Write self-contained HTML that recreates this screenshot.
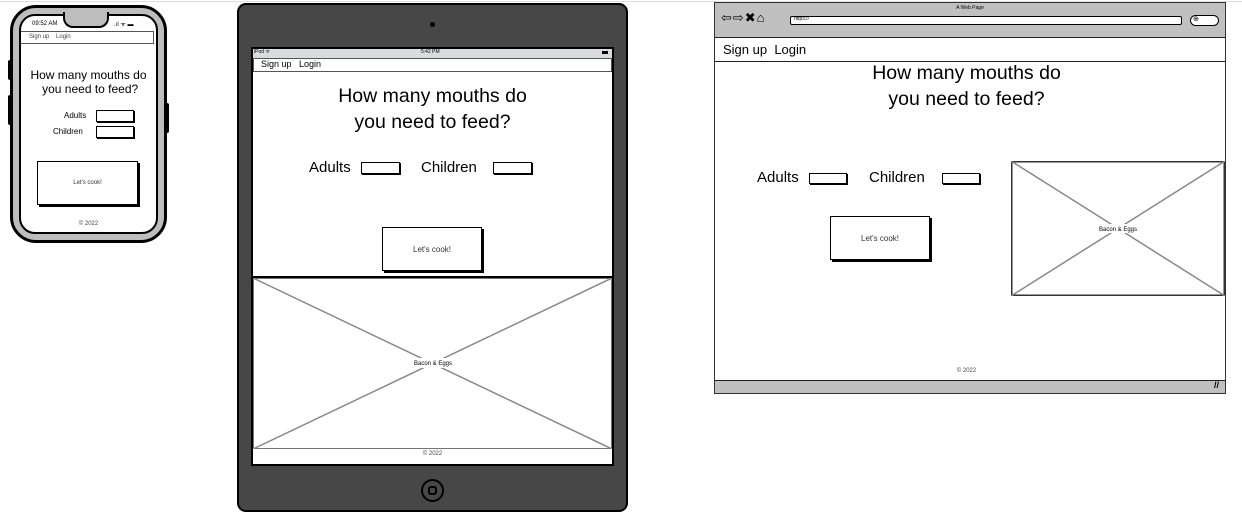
<!DOCTYPE html>
<html><head><meta charset="utf-8"><style>
*{margin:0;padding:0;box-sizing:border-box}
body{width:1242px;height:514px;background:#fff;position:relative;overflow:hidden;font-family:"Liberation Sans",sans-serif;color:#000}
.a{position:absolute}
.t{position:absolute;white-space:nowrap;text-align:center}
.inp{position:absolute;border:1.5px solid #000;background:#fff;box-shadow:1px 1px 0 #000}
.btn{position:absolute;border:1px solid #000;background:#fff;box-shadow:2px 2px 0 #000;display:flex;align-items:center;justify-content:center;font-size:8px;color:#333}
</style></head><body>
<div class="a" style="left:0;top:1px;width:1242px;height:1px;background:#ddd"></div>

<!-- PHONE -->
<div class="a" style="left:8px;top:60px;width:4px;height:20px;background:#000;border-radius:2px"></div>
<div class="a" style="left:8px;top:95px;width:4px;height:30px;background:#000;border-radius:2px"></div>
<div class="a" style="left:164px;top:103px;width:5px;height:30px;background:#000;border-radius:2px"></div>
<div class="a" style="left:10px;top:5px;width:157px;height:238px;background:#bdbdbd;border:3px solid #000;border-radius:26px"></div>
<div class="a" style="left:19px;top:14px;width:139px;height:220px;background:#fff;border:2.5px solid #000;border-radius:16px"></div>
<div class="a" style="left:63px;top:12px;width:46px;height:16px;background:#bdbdbd;border:2.5px solid #000;border-top:none;border-radius:0 0 10px 10px"></div>
<div class="t" style="left:32px;top:21px;font-size:6px">09:52 AM</div>
<div class="t" style="left:114px;top:20px;font-size:6px">.ıl ᯤ ▬</div>
<div class="a" style="left:21px;top:31px;width:133px;height:13px;border:1px solid #555;border-left:none"></div>
<div class="t" style="left:29px;top:34px;font-size:6px;color:#444">Sign up &nbsp;&nbsp; Login</div>
<div class="t" style="left:20px;top:68px;width:137px;font-size:12px;line-height:14px">How many mouths do<br>&nbsp;you need to feed?</div>
<div class="t" style="left:64px;top:111px;font-size:8px">Adults</div>
<div class="inp" style="left:96px;top:110px;width:38px;height:12px"></div>
<div class="t" style="left:53px;top:127px;font-size:8px">Children</div>
<div class="inp" style="left:96px;top:126px;width:38px;height:12px"></div>
<div class="btn" style="left:37px;top:161px;width:101px;height:44px;font-size:6px">Let's cook!</div>
<div class="t" style="left:20px;top:221px;width:137px;font-size:6px;color:#444">© 2022</div>

<!-- IPAD -->
<div class="a" style="left:237px;top:3px;width:391px;height:509px;background:#474747;border:2px solid #000;border-radius:9px"></div>
<div class="a" style="left:430px;top:22px;width:5px;height:5px;background:#000;border-radius:50%"></div>
<div class="a" style="left:251px;top:47px;width:363px;height:419px;background:#fff;border:2px solid #000"></div>
<div class="a" style="left:253px;top:49px;width:359px;height:9px;background:#d8dcdc"></div>
<div class="t" style="left:254px;top:49px;font-size:5px">iPod ᯤ</div>
<div class="t" style="left:421px;top:49px;font-size:5px">5:42 PM</div>
<div class="a" style="left:602px;top:51px;width:6px;height:3px;background:#000"></div>
<div class="a" style="left:253px;top:58px;width:359px;height:14px;border:1px solid #555"></div>
<div class="t" style="left:261px;top:59px;font-size:9px">Sign up &nbsp; Login</div>
<div class="t" style="left:253px;top:83px;width:359px;font-size:19.5px;line-height:26px">How many mouths do<br>you need to feed?</div>
<div class="t" style="left:309px;top:159px;font-size:15px">Adults</div>
<div class="inp" style="left:361px;top:162px;width:39px;height:12px"></div>
<div class="t" style="left:421px;top:159px;font-size:15px">Children</div>
<div class="inp" style="left:493px;top:162px;width:39px;height:12px"></div>
<div class="btn" style="left:382px;top:227px;width:100px;height:44px">Let's cook!</div>
<div class="a" style="left:253px;top:276px;width:359px;height:2px;background:#000"></div>
<svg class="a" style="left:253px;top:278px" width="359" height="171"><rect x="0.5" y="0.5" width="358" height="170" fill="#fff" stroke="#777"/><line x1="0" y1="0" x2="359" y2="171" stroke="#888" stroke-width="1.5"/><line x1="359" y1="0" x2="0" y2="171" stroke="#888" stroke-width="1.5"/><rect x="157" y="80" width="46" height="10" fill="#fff"/><text x="180" y="87" font-size="6" text-anchor="middle" font-family="Liberation Sans">Bacon &amp; Eggs</text></svg>
<div class="t" style="left:253px;top:451px;width:359px;font-size:6px;color:#444">© 2022</div>
<div class="a" style="left:421px;top:479px;width:23px;height:23px;border:2.5px solid #000;border-radius:50%"></div>
<div class="a" style="left:428px;top:486px;width:9px;height:9px;border:2px solid #000;border-radius:3px"></div>

<!-- BROWSER -->
<div class="a" style="left:714px;top:2px;width:512px;height:392px;border:1.5px solid #333;background:#fff"></div>
<div class="a" style="left:715px;top:3px;width:510px;height:35px;background:#c0c0c0;border-bottom:1.5px solid #222"></div>
<div class="t" style="left:940px;top:5px;width:60px;font-size:5px">A Web Page</div>
<div class="t" style="left:721px;top:10px;font-size:13px;letter-spacing:1px">⇦⇨✖⌂</div>
<div class="a" style="left:790px;top:16px;width:392px;height:9px;background:#fff;border:1.5px solid #000;border-radius:2px"></div>
<div class="t" style="left:794px;top:16px;font-size:5px">https://</div>
<div class="a" style="left:1190px;top:15px;width:29px;height:11px;background:#fff;border:1.5px solid #000;border-radius:6px"></div>
<div class="t" style="left:1193px;top:15px;font-size:7px">⊕</div>
<div class="a" style="left:715px;top:39px;width:510px;height:23px;border-bottom:1.5px solid #222"></div>
<div class="t" style="left:723px;top:42px;font-size:13px">Sign up &nbsp;Login</div>
<div class="t" style="left:715px;top:60px;width:503px;font-size:19.5px;line-height:26px">How many mouths do<br>you need to feed?</div>
<div class="t" style="left:757px;top:169px;font-size:15px">Adults</div>
<div class="inp" style="left:809px;top:173px;width:38px;height:11px"></div>
<div class="t" style="left:869px;top:169px;font-size:15px">Children</div>
<div class="inp" style="left:942px;top:173px;width:38px;height:11px"></div>
<div class="btn" style="left:830px;top:216px;width:100px;height:44px">Let's cook!</div>
<svg class="a" style="left:1011px;top:161px" width="214" height="135"><rect x="0.75" y="0.75" width="212.5" height="133.5" fill="#fff" stroke="#333" stroke-width="1.5"/><line x1="0" y1="0" x2="214" y2="135" stroke="#888" stroke-width="1.5"/><line x1="214" y1="0" x2="0" y2="135" stroke="#888" stroke-width="1.5"/><rect x="85" y="63" width="44" height="9" fill="#fff"/><text x="107" y="70" font-size="6" text-anchor="middle" font-family="Liberation Sans">Bacon &amp; Eggs</text></svg>
<div class="t" style="left:715px;top:368px;width:503px;font-size:6px;color:#444">© 2022</div>
<div class="a" style="left:715px;top:380px;width:510px;height:13px;background:#c0c0c0;border-top:1.5px solid #222"></div>
<div class="t" style="left:1214px;top:380px;font-size:9px;font-weight:bold">//</div>
</body></html>
